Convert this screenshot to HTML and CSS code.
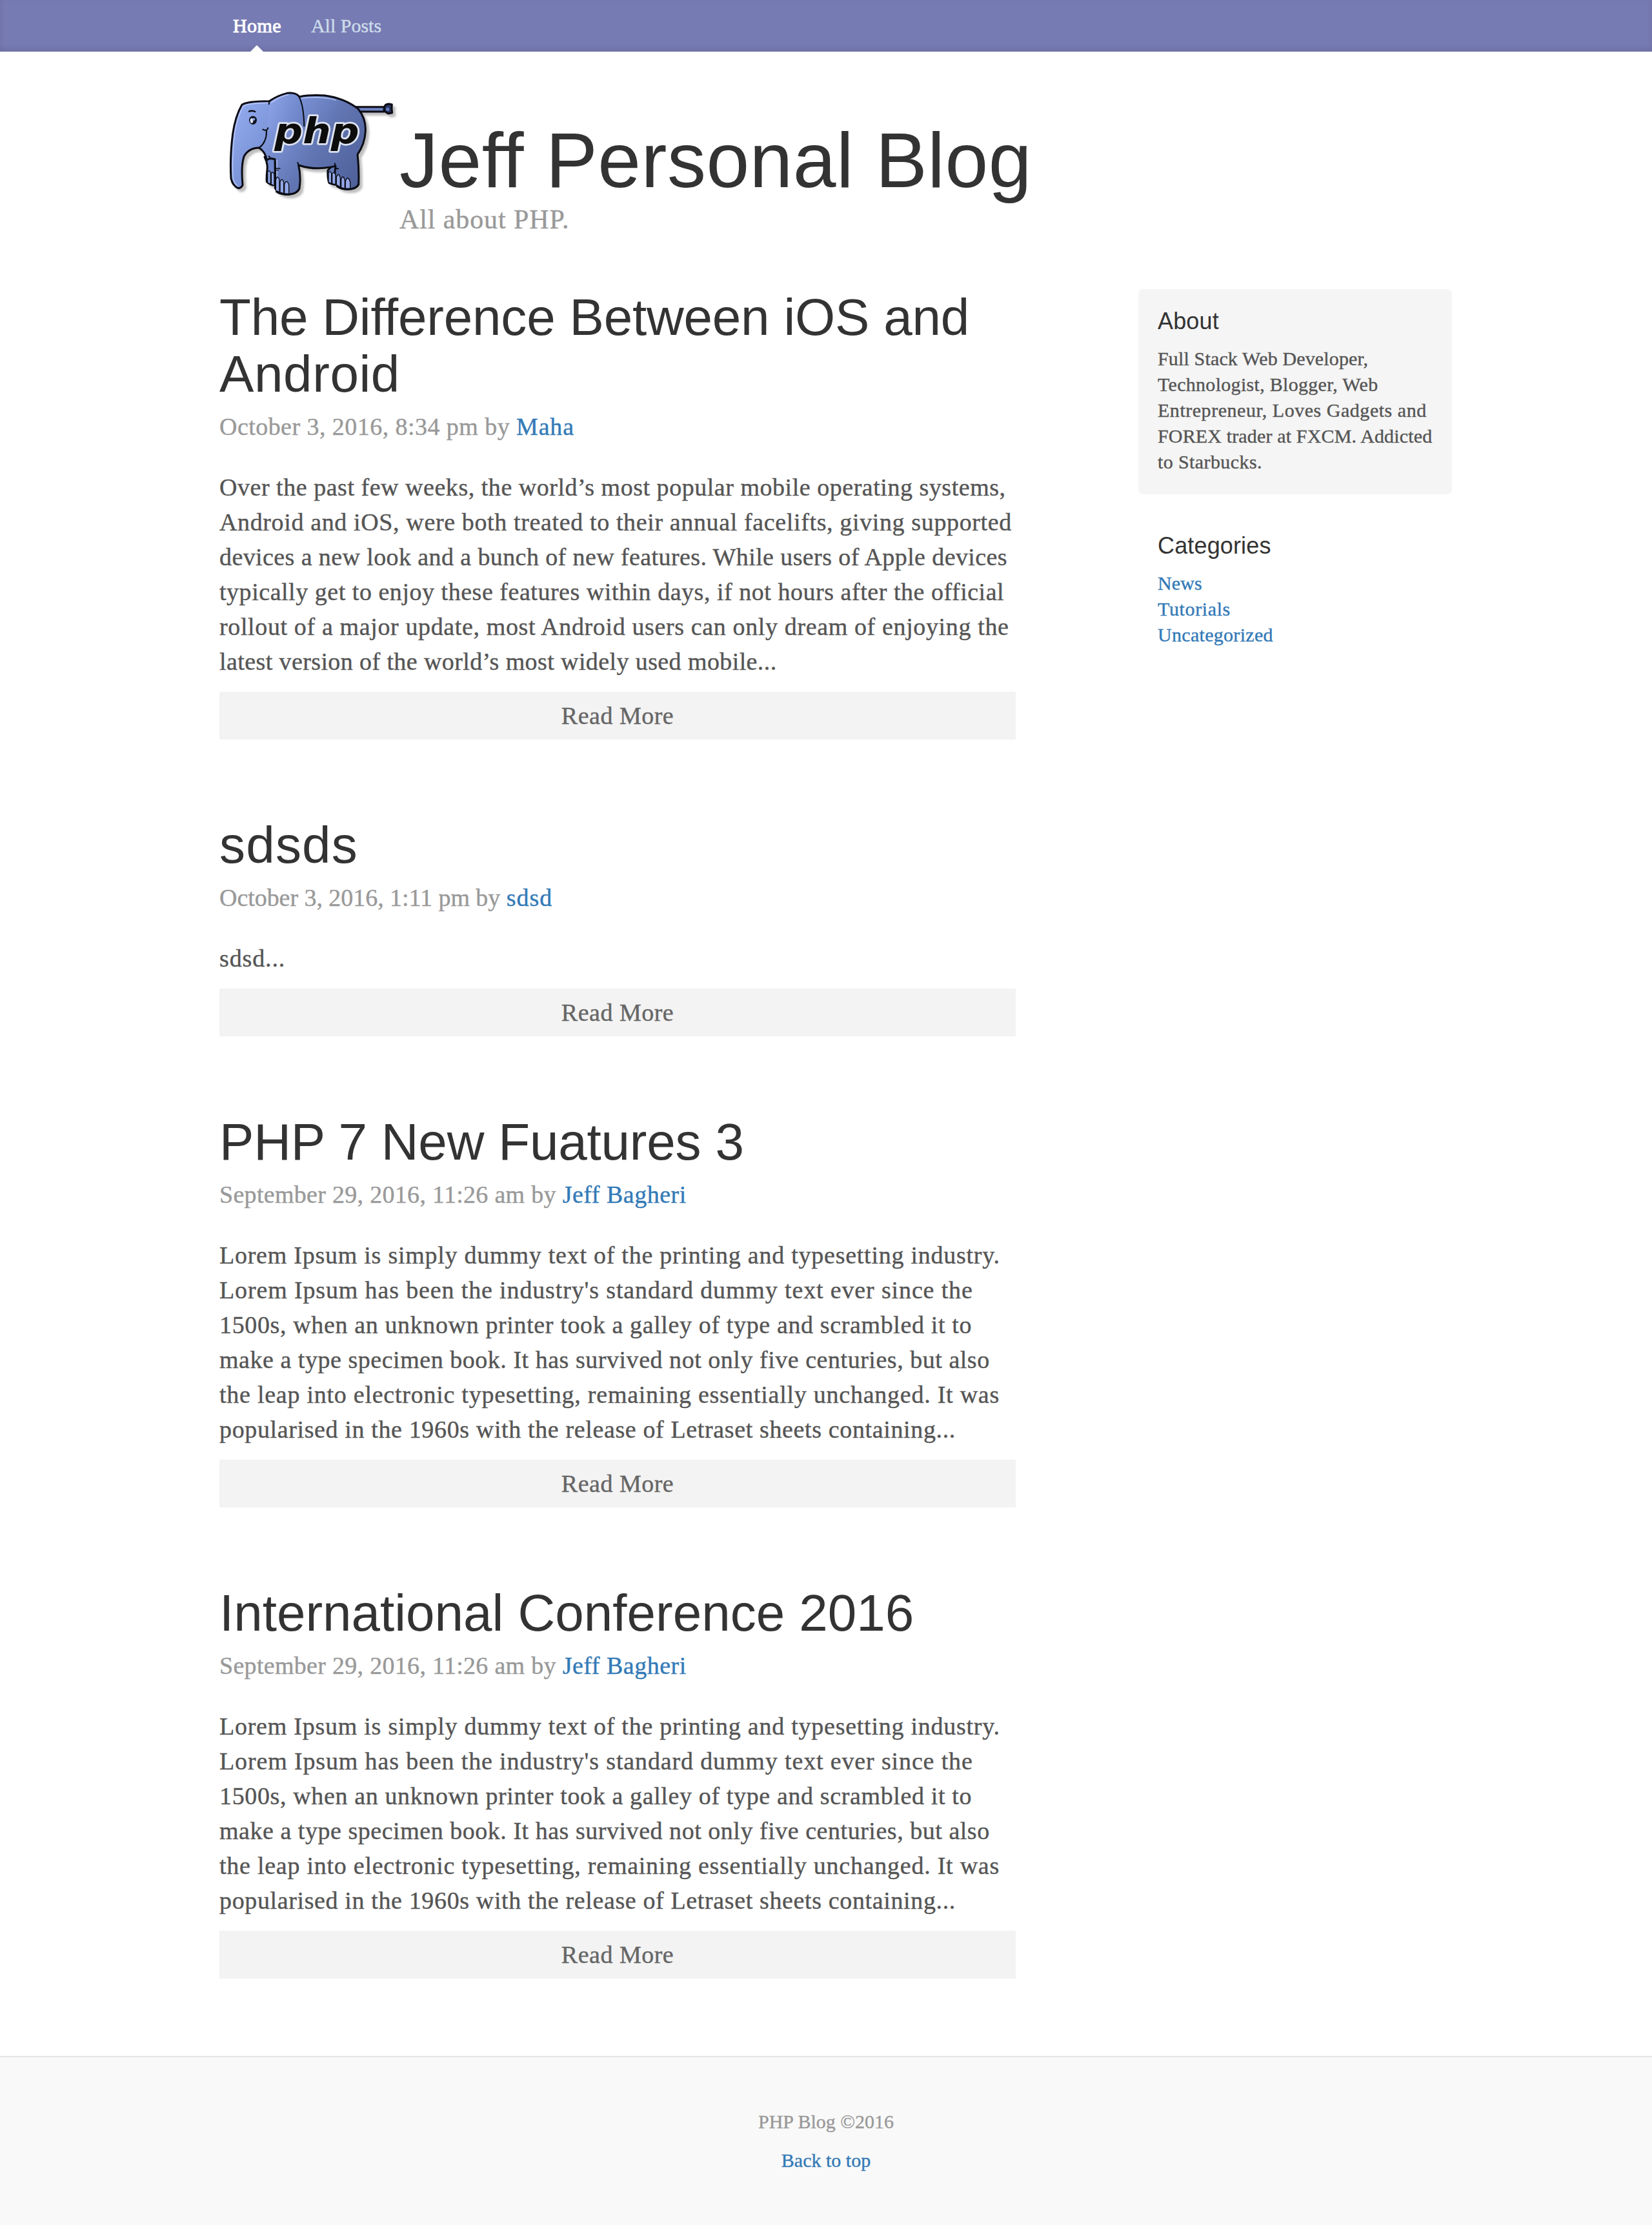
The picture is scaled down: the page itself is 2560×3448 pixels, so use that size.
FILE: index.html
```html
<!DOCTYPE html>
<html lang="en">
<head>
<meta charset="utf-8">
<title>Jeff Personal Blog</title>
<link rel="stylesheet" href="styles.css">
</head>
<body>
<nav class="masthead">
  <div class="container nav-list">
    <a class="nav-item active">Home</a>
    <a class="nav-item">All Posts</a>
  </div>
</nav>

<header class="container blog-header">
  <svg class="logo" viewBox="30 0 837 600" aria-label="PHP elephant">
    <defs>
      <linearGradient id="skin" x1="0" y1="0.2" x2="1" y2="0.7">
        <stop offset="0" stop-color="#92aaee"/>
        <stop offset="0.35" stop-color="#7a92d6"/>
        <stop offset="0.65" stop-color="#6175b2"/>
        <stop offset="1" stop-color="#50629c"/>
      </linearGradient>
      <linearGradient id="ear" x1="0" y1="0.3" x2="1" y2="0.7">
        <stop offset="0" stop-color="#8ba2e6"/>
        <stop offset="1" stop-color="#6980c4"/>
      </linearGradient>
      <filter id="shade" x="-10%" y="-10%" width="125%" height="125%">
        <feDropShadow dx="13" dy="14" stdDeviation="5" flood-color="#000" flood-opacity="0.25"/>
      </filter>
    </defs>
    <g filter="url(#shade)" stroke="#0a0c14" stroke-width="9" stroke-linejoin="round" stroke-linecap="round">
      <path fill="#6f84c2" d="M660 137H795V159H675Z"/>
      <path fill="#2a3560" d="M797 139Q799 123 818 123L832 126Q829 145 833 164L816 168Q799 162 797 150Z"/>
      <path fill="#7088cc" d="M240 370Q256 400 252 430Q248 465 250 485Q265 500 290 502L310 380Z"/>
      <path fill="#6479b8" d="M565 400L534 432Q532 470 540 490Q560 500 590 500L600 420Z"/>
      <path fill="url(#skin)" d="M134 128Q155 110 262 110Q300 84 345 73Q385 68 402 90Q450 80 520 84Q610 96 675 146Q712 190 709 250Q706 310 672 358Q680 430 677 498Q665 520 625 520Q590 518 572 498Q562 460 570 412Q480 435 398 408Q410 460 402 515Q392 543 345 544Q300 540 290 515L288 380Q262 372 250 385Q244 345 214 327Q165 328 144 368Q130 410 138 500Q132 514 118 515Q92 505 84 470Q78 370 92 262Q104 180 134 128Z"/>
    </g>
    <path fill="url(#ear)" d="M264 117Q300 88 345 79Q385 74 398 96Q420 140 424 226L330 260L250 240Z"/>
    <g fill="none" stroke="#c3d0fa" stroke-width="5" stroke-linecap="round" opacity="0.75">
      <path d="M141 134Q160 119 258 118"/>
      <path d="M139 137Q110 190 100 266Q87 370 93 468Q100 496 116 506"/>
      <path d="M272 116Q310 89 350 80"/>
      <path d="M412 96Q510 86 570 105"/>
      <path d="M297 385V460"/>
    </g>
    <g fill="none" stroke="#0a0c14" stroke-width="6" stroke-linecap="round" stroke-linejoin="round">
      <path d="M400 90Q422 130 424 226"/>
      <path d="M262 110L260 124"/>
      <path d="M232 242Q252 252 256 235M249 248Q250 300 216 326"/>
      <path d="M168 158Q180 152 196 159" stroke-width="7"/>
      <path d="M260 366Q270 380 286 381"/>
      <path d="M398 408L394 396M570 412L566 400M568 424L582 424"/>
      <path stroke-width="4" d="M288 423H312M292 431H304"/>
    </g>
    <ellipse cx="186" cy="199" rx="18" ry="20" fill="#111522"/>
    <ellipse cx="180" cy="201" rx="7" ry="11" fill="#dfe6fb"/>
    <circle cx="190" cy="194" r="6" fill="#8ca2e4"/>
    <g fill="#94a8e8" stroke="#0a0c14" stroke-width="4">
      <path d="M254 486V442Q260 426 268 442V494M271 494V446Q278 434 285 450V502"/>
      <path d="M292 524V476Q300 450 309 476V530M312 532V486Q321 462 329 488V536M332 538V496Q344 470 353 500V538"/>
      <path d="M537 484V444Q544 430 551 446V492M554 492V448Q562 436 570 452V494M574 496V464Q584 438 592 466V508M596 510V474Q604 448 613 478V514M616 514V482Q627 452 638 486V514"/>
    </g>
    <path d="M289 390V518M292 529Q310 545 345 544Q392 543 402 515M575 505Q595 520 625 520Q665 520 677 498" fill="none" stroke="#0a0c14" stroke-width="8"/>
    <circle cx="812" cy="148" r="8" fill="#5f78c0"/>
    <text class="logo-text" x="286" y="307" textLength="394" lengthAdjust="spacingAndGlyphs">php</text>
  </svg>
  <div>
    <h1 class="blog-title">Jeff Personal Blog</h1>
    <p class="tagline">All about PHP.</p>
  </div>
</header>

<div class="container content">
  <main class="blog-main">
    <article class="post">
      <h2 class="post-title"><span class="title-tight">The Difference Between iOS and</span><br><span class="title-open">Android</span></h2>
      <p class="meta">October 3, 2016, 8:34 pm by <a>Maha</a></p>
      <p class="excerpt"><span class="t5">Over the past few weeks, the world’s most popular mobile operating systems,</span>
        <span class="t6">Android and iOS, were both treated to their annual facelifts, giving supported</span>
        <span class="t4">devices a new look and a bunch of new features. While users of Apple devices</span>
        <span class="t5">typically get to enjoy these features within days, if not hours after the official</span>
        <span class="t6">rollout of a major update, most Android users can only dream of enjoying the</span>
        <span class="t4">latest version of the world’s most widely used mobile...</span></p>
      <a class="more">Read More</a>
    </article>
    <article class="post">
      <h2 class="post-title title-wide">sdsds</h2>
      <p class="meta meta-tight">October 3, 2016, 1:11 pm by <a>sdsd</a></p>
      <p class="excerpt"><span class="t8">sdsd...</span></p>
      <a class="more">Read More</a>
    </article>
    <article class="post">
      <h2 class="post-title title-tight">PHP 7 New Fuatures 3</h2>
      <p class="meta meta-mid">September 29, 2016, 11:26 am by <a>Jeff Bagheri</a></p>
      <p class="excerpt"><span class="t7">Lorem Ipsum is simply dummy text of the printing and typesetting industry.</span>
        <span class="t8">Lorem Ipsum has been the industry's standard dummy text ever since the</span>
        <span class="t6">1500s, when an unknown printer took a galley of type and scrambled it to</span>
        <span class="t5">make a type specimen book. It has survived not only five centuries, but also</span>
        <span class="t7">the leap into electronic typesetting, remaining essentially unchanged. It was</span>
        <span class="t6">popularised in the 1960s with the release of Letraset sheets containing...</span></p>
      <a class="more">Read More</a>
    </article>
    <article class="post">
      <h2 class="post-title">International Conference 2016</h2>
      <p class="meta meta-mid">September 29, 2016, 11:26 am by <a>Jeff Bagheri</a></p>
      <p class="excerpt"><span class="t7">Lorem Ipsum is simply dummy text of the printing and typesetting industry.</span>
        <span class="t8">Lorem Ipsum has been the industry's standard dummy text ever since the</span>
        <span class="t6">1500s, when an unknown printer took a galley of type and scrambled it to</span>
        <span class="t5">make a type specimen book. It has survived not only five centuries, but also</span>
        <span class="t7">the leap into electronic typesetting, remaining essentially unchanged. It was</span>
        <span class="t6">popularised in the 1960s with the release of Letraset sheets containing...</span></p>
      <a class="more">Read More</a>
    </article>
  </main>
  <aside class="sidebar">
    <section class="module module-inset">
      <h4>About</h4>
      <p>Full Stack Web Developer,<br><span class="t3">Technologist, Blogger, Web</span><br><span class="t5">Entrepreneur, Loves Gadgets and</span><br>FOREX trader at FXCM. Addicted<br><span class="t4">to Starbucks.</span></p>
    </section>
    <section class="module">
      <h4>Categories</h4>
      <ul>
        <li><a>News</a></li>
        <li><a class="t6">Tutorials</a></li>
        <li><a class="t3">Uncategorized</a></li>
      </ul>
    </section>
  </aside>
</div>

<footer class="blog-footer">
  <p class="copyright">PHP Blog ©2016</p>
  <p><a>Back to top</a></p>
</footer>
</body>
</html>
```
FILE: styles.css
```css
* { box-sizing: border-box; }
body {
  margin: 0;
  background: #fff;
  color: #555;
  font-family: Georgia, "Liberation Serif", serif;
  font-size: 38px;
  line-height: 54px;
}
h1, h2, h4 {
  margin: 0;
  color: #333;
  font-family: "Liberation Sans", Arial, sans-serif;
  font-weight: 400;
}
p, ul { margin: 0; padding: 0; list-style: none; }
a { color: #337ab7; text-decoration: none; }
p, li, .more { -webkit-text-stroke: 0.4px currentColor; }
.container { width: 1940px; margin: 0 auto; padding: 0 30px; }

.masthead {
  height: 80px;
  background: #777bb3;
  box-shadow: inset 0 -4px 10px rgba(0, 0, 0, 0.1);
}
.nav-list { display: flex; padding: 0 0 0 31px; }
.nav-item {
  position: relative;
  height: 80px;
  padding: 20px;
  color: #cdddeb;
  font-size: 30px;
  line-height: 40px;
  -webkit-text-stroke: 0.4px currentColor;
}
.nav-item + .nav-item { margin-left: 6px; }
.active { color: #fff; letter-spacing: 0.4px; -webkit-text-stroke-width: 0.9px; }
.active::after {
  content: "";
  position: absolute;
  bottom: 0;
  left: 50%;
  margin-left: -10px;
  border: 10px solid transparent;
  border-top: 0;
  border-bottom-color: #fff;
}

.blog-header { display: flex; height: 368px; }
.logo { width: 279px; height: 200px; margin-top: 40px; flex: none; }
.logo-text {
  font: italic bold 166px "DejaVu Sans", sans-serif;
  fill: #0c0c0c;
  stroke: #dde2f0;
  stroke-width: 16px;
  stroke-linejoin: round;
  paint-order: stroke;
}
.blog-title { margin-top: 104px; font-size: 120px; line-height: 128px; letter-spacing: 0.45px; }
.tagline { color: #999; font-size: 42px; line-height: 57px; letter-spacing: 0.9px; }

.content { display: flex; justify-content: space-between; padding-right: 0; }
.blog-main { width: 1234px; }
.post { margin-bottom: 120px; }
.post-title { margin-bottom: 10px; font-size: 80px; line-height: 88px; }
.title-tight { letter-spacing: -0.2px; }
.title-open { letter-spacing: 0.6px; }
.title-wide { letter-spacing: 1.2px; }
.meta { margin-bottom: 40px; color: #999; letter-spacing: 0.45px; }
.meta a { letter-spacing: 0.8px; }
.meta-mid { letter-spacing: 0.3px; }
.meta-mid a { letter-spacing: 0.5px; }
.meta-tight { letter-spacing: -0.05px; }
.meta-tight a { letter-spacing: 1px; }
.excerpt { margin-bottom: 20px; white-space: nowrap; }
.excerpt span { display: block; }
.t3 { letter-spacing: 0.3px; }
.t4 { letter-spacing: 0.4px; }
.t5 { letter-spacing: 0.53px; }
.t6 { letter-spacing: 0.63px; }
.t7 { letter-spacing: 0.75px; }
.t8 { letter-spacing: 0.86px; }
.more {
  display: block;
  padding: 10px 0;
  background: #f3f3f3;
  color: #666;
  text-align: center;
  letter-spacing: 0.5px;
}

.sidebar { width: 486px; font-size: 30px; line-height: 40px; white-space: nowrap; }
.module { padding: 30px; margin-bottom: 30px; letter-spacing: 0.15px; }
.module-inset { background: #f5f5f5; border-radius: 8px; }
.module h4 { margin-bottom: 18px; font-size: 36px; line-height: 40px; }

.blog-footer {
  height: 262px;
  padding: 80px 0;
  border-top: 2px solid #e5e5e5;
  background: #f9f9f9;
  font-size: 30px;
  line-height: 40px;
  text-align: center;
}
.copyright { margin-bottom: 20px; color: #999; }
```
